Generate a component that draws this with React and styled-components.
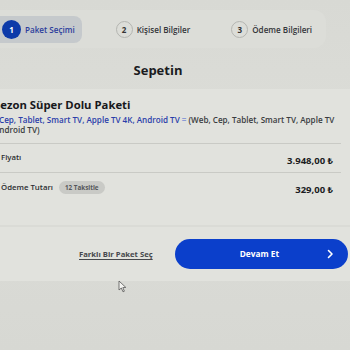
import React from "react";
import styled, { createGlobalStyle } from "styled-components";

const Global = createGlobalStyle`
  html, body { margin: 0; padding: 0; }
  body {
    background: #d5d6d1;
    font-family: "Open Sans", "Noto Sans", sans-serif;
    overflow: hidden;
    width: 350px;
    height: 350px;
  }
`;

const Page = styled.div`
  position: relative;
  width: 350px;
  height: 350px;
  background: linear-gradient(180deg, #d8d9d4 0%, #dcddd8 40%, #d7d8d3 100%);
  overflow: hidden;
`;

const Stepper = styled.div`
  margin-top: 10px;
  width: 326px;
  height: 38px;
  background: #dcddd8;
  border-radius: 0 12px 12px 0;
  display: flex;
  align-items: center;
  gap: 32px;
`;

const Step = styled.div`
  display: flex;
  align-items: center;
  gap: 4px;
  height: 27px;
  padding: 0 7px 0 2px;
  border-radius: 0 8px 8px 0;
  white-space: nowrap;
  background: ${(p) => (p.$active ? "#c5c9cc" : "transparent")};
  color: ${(p) => (p.$active ? "#2b3d9c" : "#34363a")};
  font-size: 8.1px;
  font-weight: 600;
`;

const Circle = styled.span`
  width: ${(p) => (p.$active ? 19 : 17)}px;
  height: ${(p) => (p.$active ? 19 : 17)}px;
  box-sizing: border-box;
  border-radius: 50%;
  display: flex;
  align-items: center;
  justify-content: center;
  font-size: 8px;
  font-weight: 700;
  flex-shrink: 0;
  background: ${(p) => (p.$active ? "#0d3aa9" : "transparent")};
  color: ${(p) => (p.$active ? "#ffffff" : "#333")};
  border: ${(p) => (p.$active ? "none" : "1px solid #b4b5b1")};
`;

const Title = styled.h1`
  margin: 14px 0 0;
  text-align: center;
  padding-right: 34px;
  font-size: 13px;
  font-weight: 700;
  color: #1b1c1f;
  line-height: 16px;
`;

const Card = styled.section`
  margin-top: 11px;
  margin-left: -6px;
  width: 356px;
  background: #e1e2dd;
  padding: 8px 0 0;
  height: 136px;
  box-sizing: border-box;
`;

const PackageName = styled.h2`
  margin: 0;
  font-size: 11.3px;
  font-weight: 700;
  color: #17181b;
  line-height: 16px;
  white-space: nowrap;
`;

const Desc = styled.p`
  margin: 2px 0 0;
  font-size: 8.1px;
  font-weight: 600;
  line-height: 10px;
  color: #3a3c40;
  width: 350px;
  padding-left: 5px;
  white-space: nowrap;
`;

const Blue = styled.span`
  color: ${(p) => (p.$light ? "#8a9ad6" : "#2b3eaa")};
`;

const Wrapped = styled.span`
  margin-left: -5px;
`;

const Row = styled.div`
  display: flex;
  align-items: center;
  justify-content: space-between;
  border-top: 1px solid #c9cac5;
  margin-right: 9px;
  height: 28px;
  padding-right: 8px;
  padding-left: 7px;
  margin-top: ${(p) => p.$mt || 0}px;
`;

const Label = styled.div`
  display: flex;
  align-items: center;
  gap: 6px;
  font-size: 7.8px;
  font-weight: 600;
  color: #2b2d30;
  margin-top: ${(p) => p.$lift || 0}px;
  white-space: nowrap;
`;

const Badge = styled.span`
  background: #c9cac6;
  color: #55575b;
  font-size: 6.3px;
  font-weight: 700;
  padding: 2px 6px;
  border-radius: 8px;
`;

const Price = styled.div`
  font-size: 9.5px;
  font-weight: 700;
  color: #1b1c1f;
  margin-top: 4px;
`;

const Footer = styled.div`
  height: 54px;
  margin-top: 2px;
  background: #e1e2dd;
  display: flex;
  align-items: center;
  padding-left: 79px;
  gap: 22px;
`;

const LinkText = styled.a`
  font-size: 7.7px;
  font-weight: 700;
  color: #46484c;
  text-decoration: underline;
  text-underline-offset: 2px;
  white-space: nowrap;
`;

const Button = styled.button`
  width: 173px;
  height: 30px;
  border: none;
  border-radius: 15px;
  background: #0b3fcb;
  color: #ffffff;
  display: flex;
  align-items: center;
  justify-content: space-between;
  padding: 0 13px 0 65px;
  font-family: inherit;
  font-size: 8.3px;
  font-weight: 700;
  margin-top: -1px;
`;

const Cursor = styled.svg`
  position: absolute;
  left: 118px;
  top: 280px;
`;

export default function App() {
  return (
    <Page>
      <Global />
      <Stepper>
        <Step $active>
          <Circle $active>1</Circle>
          Paket Seçimi
        </Step>
        <Step>
          <Circle>2</Circle>
          Kişisel Bilgiler
        </Step>
        <Step>
          <Circle>3</Circle>
          Ödeme Bilgileri
        </Step>
      </Stepper>
      <Title>Sepetin</Title>
      <Card>
        <PackageName>Sezon Süper Dolu Paketi</PackageName>
        <Desc>
          <Blue>Cep, Tablet, Smart TV, Apple TV 4K, Android TV</Blue>{" "}
          <Blue $light>=</Blue> (Web, Cep, Tablet, Smart TV, Apple TV
          <br />
          <Wrapped>Android TV)</Wrapped>
        </Desc>
        <Row $mt={8}>
          <Label $lift={-3}>Fiyatı</Label>
          <Price>3.948,00 ₺</Price>
        </Row>
        <Row>
          <Label>
            Ödeme Tutarı <Badge>12 Taksitle</Badge>
          </Label>
          <Price>329,00 ₺</Price>
        </Row>
      </Card>
      <Footer>
        <LinkText>Farklı Bir Paket Seç</LinkText>
        <Button>
          Devam Et
          <svg width="10" height="10" viewBox="0 0 10 10">
            <path d="M3.5 1.5 L7 5 L3.5 8.5" fill="none" stroke="#fff" strokeWidth="1.6" strokeLinecap="round" strokeLinejoin="round" />
          </svg>
        </Button>
      </Footer>
      <Cursor width="9" height="13" viewBox="0 0 9 13">
        <path d="M1 1 L1 10 L3.3 8 L5 11.8 L6.4 11.2 L4.8 7.6 L7.8 7.4 Z" fill="#f4f4f1" stroke="#555" strokeWidth="0.8" strokeLinejoin="round" />
      </Cursor>
    </Page>
  );
}
